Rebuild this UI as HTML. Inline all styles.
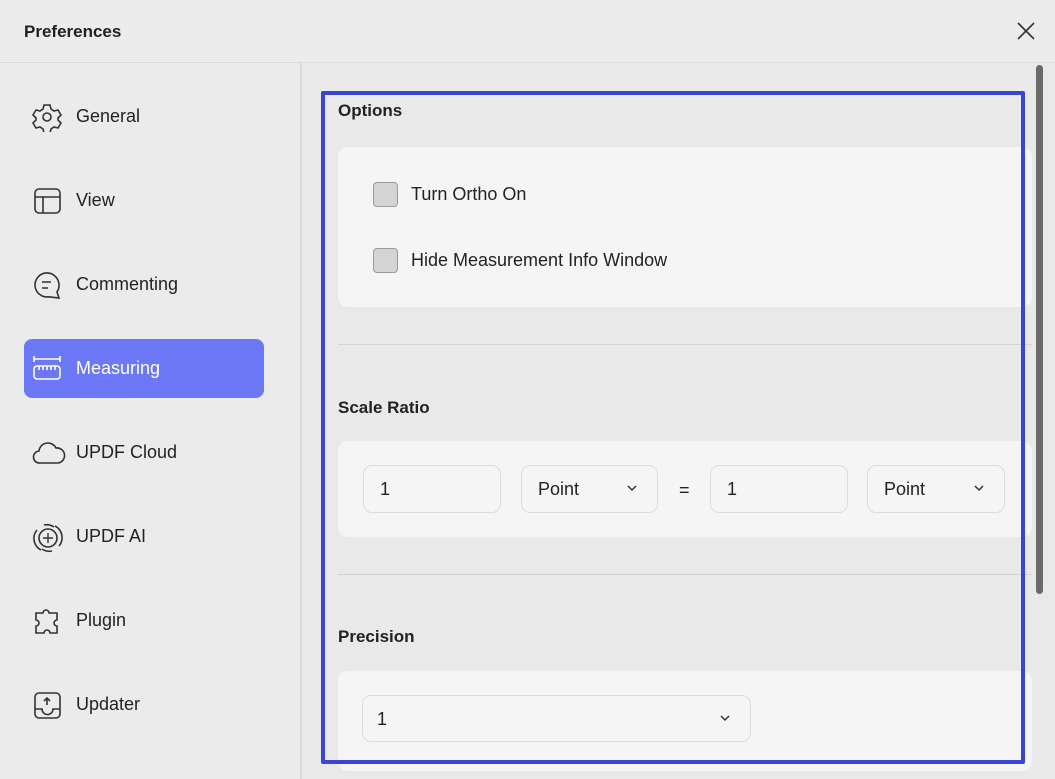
<!DOCTYPE html>
<html><head><style>
body{margin:0;width:1055px;height:779px;background:#e9e9e9;font-family:"Liberation Sans",sans-serif;color:#222;position:relative;overflow:hidden}
.a{position:absolute}
.hdr{left:0;top:0;width:1055px;height:62px;background:#ececec;border-bottom:1px solid #dcdcdc}
.side{left:0;top:63px;width:300px;height:716px;background:#ebebeb;border-right:2px solid #d8d8d8}
.item{position:absolute;left:24px;width:240px;height:59px;border-radius:8px;font-size:18px;line-height:59px}
.item span{position:absolute;left:52px}
.item svg{position:absolute;left:8px;top:15px}
.card{background:#f5f5f5;border-radius:10px}
.box{background:#f5f5f5;border:1px solid #dcdcdc;border-radius:9px;font-size:18px;line-height:46px;box-sizing:border-box;padding-left:16px}
.chev{position:absolute;right:20px;top:19px}
.cb{width:25px;height:25px;border:1px solid #9a9a9a;background:#d4d4d4;border-radius:4px;box-sizing:border-box}
.t{font-size:17px;font-weight:bold}
</style></head><body>
<div class="a hdr"></div>
<div class="a t" style="left:24px;top:22px">Preferences</div>
<svg class="a" style="left:1016px;top:21px" width="20" height="20"><path d="M2 2L18 18M18 2L2 18" stroke="#333" stroke-width="1.6"/></svg>
<div class="a side">
<div class="item" style="top:24px"><svg width="30" height="30" viewBox="0 0 30 30" fill="none" stroke="#333" stroke-width="1.6"><path d="M12 3h6l1 4 3 2 4-1 3 5-3 3v2l3 3-3 5-4-1-3 2-1 4h-6l-1-4-3-2-4 1-3-5 3-3v-2l-3-3 3-5 4 1 3-2z"/><circle cx="15" cy="15" r="4"/></svg><span>General</span></div>
<div class="item" style="top:108px"><svg width="30" height="30" fill="none" stroke="#333" stroke-width="1.6"><rect x="3" y="3" width="25" height="24" rx="4"/><path d="M3 11h25M11 11v16"/></svg><span>View</span></div>
<div class="item" style="top:192px"><svg width="30" height="30" fill="none" stroke="#333" stroke-width="1.6"><path d="M27 15A12 12 0 1 0 17 26.8L27 28L25 22A12 12 0 0 0 27 15z"/><path d="M10 12h9M10 18h6"/></svg><span>Commenting</span></div>
<div class="item" style="top:276px;background:#6d78f6;color:#fff"><svg width="30" height="30" fill="none" stroke="#fff" stroke-width="1.6"><path d="M2 2v6M28 2v6M2 5h26"/><rect x="2" y="12" width="26" height="13" rx="3"/><path d="M7 12v4M11 12v4M15 12v4M19 12v4M23 12v4"/></svg><span>Measuring</span></div>
<div class="item" style="top:360px"><svg width="34" height="30" fill="none" stroke="#333" stroke-width="1.6"><path d="M8 25a6 6 0 0 1-1-12 9 9 0 0 1 17-3 7 7 0 0 1 2 15z"/></svg><span>UPDF Cloud</span></div>
<div class="item" style="top:444px"><svg width="34" height="32" fill="none" stroke="#333" stroke-width="1.6"><circle cx="16" cy="16" r="9"/><path d="M5 8a13 13 0 0 0 4 20M27 24a13 13 0 0 0-4-20M12 3a13 13 0 0 1 10 2M20 29a13 13 0 0 1-10-2"/><path d="M16 11v10M11 16h10" stroke-width="1.4"/></svg><span>UPDF AI</span></div>
<div class="item" style="top:528px"><svg width="30" height="30" fill="none" stroke="#333" stroke-width="1.6"><path d="M4 7h7a3 3 0 1 1 6 0h8v7a3 3 0 1 0 0 6v7h-7a3 3 0 1 0-6 0H4v-7a3 3 0 1 0 0-6z"/></svg><span>Plugin</span></div>
<div class="item" style="top:612px"><svg width="30" height="30" fill="none" stroke="#333" stroke-width="1.6"><rect x="3" y="3" width="25" height="25" rx="4"/><path d="M3 19h7a5 5 0 0 0 11 0h7M15 15V8M12 11l3-3 3 3"/></svg><span>Updater</span></div>
</div>
<div class="a t" style="left:338px;top:101px">Options</div>
<div class="a card" style="left:338px;top:147px;width:694px;height:160px"></div>
<div class="a cb" style="left:373px;top:182px"></div>
<div class="a" style="left:411px;top:184px;font-size:18px">Turn Ortho On</div>
<div class="a cb" style="left:373px;top:248px"></div>
<div class="a" style="left:411px;top:250px;font-size:18px">Hide Measurement Info Window</div>
<div class="a" style="left:338px;top:344px;width:694px;height:1px;background:#d2d2d2"></div>
<div class="a t" style="left:338px;top:398px">Scale Ratio</div>
<div class="a card" style="left:338px;top:441px;width:694px;height:96px"></div>
<div class="a box" style="left:363px;top:465px;width:138px;height:48px">1</div>
<div class="a box" style="left:521px;top:465px;width:137px;height:48px">Point<svg class="chev" width="10" height="7"><path d="M1 1l4 4 4-4" stroke="#333" fill="none" stroke-width="1.5"/></svg></div>
<div class="a" style="left:679px;top:480px;font-size:18px">=</div>
<div class="a box" style="left:710px;top:465px;width:138px;height:48px">1</div>
<div class="a box" style="left:867px;top:465px;width:138px;height:48px">Point<svg class="chev" width="10" height="7"><path d="M1 1l4 4 4-4" stroke="#333" fill="none" stroke-width="1.5"/></svg></div>
<div class="a" style="left:338px;top:574px;width:694px;height:1px;background:#d2d2d2"></div>
<div class="a t" style="left:338px;top:627px">Precision</div>
<div class="a card" style="left:338px;top:671px;width:694px;height:100px"></div>
<div class="a box" style="left:362px;top:695px;width:389px;height:47px;padding-left:14px">1<svg class="chev" width="10" height="7"><path d="M1 1l4 4 4-4" stroke="#333" fill="none" stroke-width="1.5"/></svg></div>
<div class="a" style="left:321px;top:91px;width:696px;height:665px;border:4px solid #3a45d0;border-radius:2px"></div>
<div class="a" style="left:1036px;top:65px;width:7px;height:529px;background:#6a6a6a;border-radius:4px"></div>
</body></html>
